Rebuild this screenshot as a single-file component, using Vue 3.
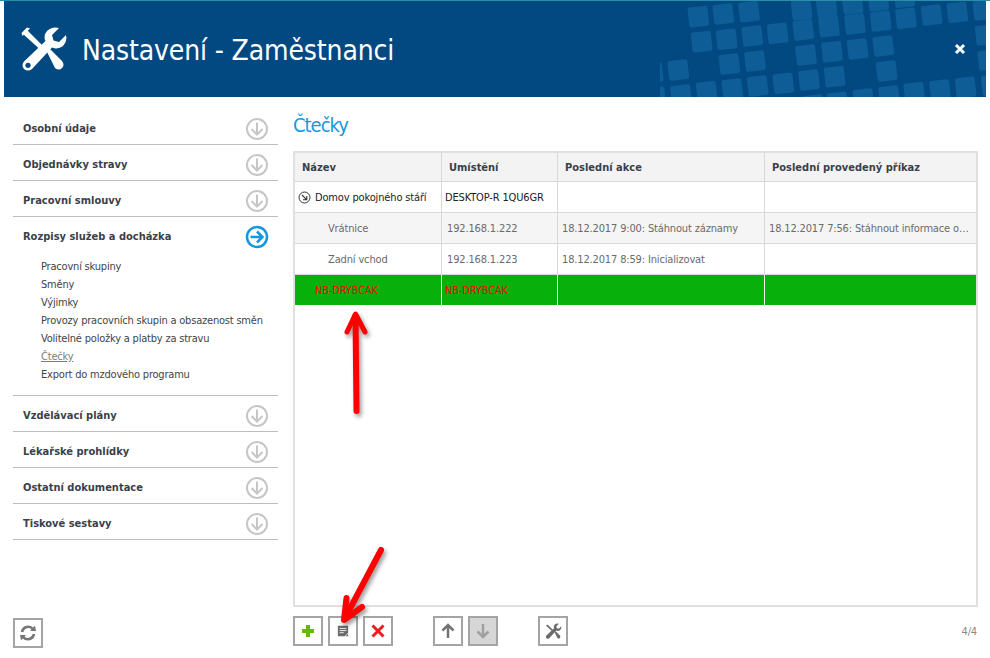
<script setup>
const squares = [
  [395,0],[470,-8],[548,-18],[625,-28],[703,-38],
  [85,20],[160,12],[237,5],[708,25],[785,15],[862,7],[940,0],
  [95,95],[170,88],[247,78],[323,70],[400,60],[477,50],[555,42],[632,33],
  [178,162],[255,153],[408,135],[486,125],[563,117],[640,108],[947,75],
  [25,180],[650,183],[955,150],[-52,188],
  [340,220],[417,210],[494,200],
  [263,228],[187,237],[110,245],[33,255],[-44,262],
  [965,225],[887,232],[810,240],[733,248],[657,258],[580,267],[503,277],[430,285]
].map(([x, y]) => ({ x: x / 3, y: y / 3 - 1 }))

const sectionsTop = ['Osobní údaje', 'Objednávky stravy', 'Pracovní smlouvy']
const sectionsBottom = ['Vzdělávací plány', 'Lékařské prohlídky', 'Ostatní dokumentace', 'Tiskové sestavy']
const subItems = [
  'Pracovní skupiny', 'Směny', 'Výjimky', 'Provozy pracovních skupin a obsazenost směn',
  'Volitelné položky a platby za stravu', 'Čtečky', 'Export do mzdového programu'
]
const headers = ['Název', 'Umístění', 'Poslední akce', 'Poslední provedený příkaz']
</script>

<template>
  <div class="page">
    <header class="header">
      <svg class="pattern" width="326" height="96" viewBox="0 0 326 96">
        <rect v-for="(s, i) in squares" :key="i" :x="s.x" :y="s.y" width="20" height="20" rx="2.5"
          fill="#0e5d97" :transform="`rotate(-6.5 ${s.x + 10} ${s.y + 10})`" />
      </svg>
      <svg class="logo" width="48" height="48" viewBox="0 0 48 48">
        <path d="M3 8 L7 4 L27 24 L24 27 Z" fill="#fff"/>
        <path d="M1.5 9 L9 1.5 L6 0.5 L0.5 6 Z" fill="#fff" transform="translate(1 1)"/>
        <path d="M27 26 L30 23 L42 35 Q45 39 42 42 Q39 45 35 42 Z" fill="#fff"/>
        <path d="M46 9 L39 16 L33.5 14.5 L32 9 L39 2 Q32 0 27 5 Q23 10 25.5 15 L4 35.5 Q1 39.5 4 43 Q8 46 12 43 L32 21.5 Q38 24 43 20 Q47.5 15 46 9 Z" fill="#fff"/>
        <circle cx="8" cy="39.3" r="2.6" fill="#024982"/>
      </svg>
      <h1 class="title">Nastavení - Zaměstnanci</h1>
      <svg class="close" width="12" height="12" viewBox="0 0 12 12">
        <path d="M2 2 L10 10 M10 2 L2 10" stroke="#fff" stroke-width="3"/>
      </svg>
    </header>

    <div class="main">
      <aside class="side">
        <nav class="nav">
          <div v-for="s in sectionsTop" :key="s" class="sec">
            <span>{{ s }}</span>
            <svg class="ci" width="24" height="24" viewBox="0 0 24 24">
              <circle cx="12" cy="12" r="10" fill="none" stroke="#c6c6c6" stroke-width="2"/>
              <path d="M12 5.5 V17.5 M6.5 12 L12 17.5 L17.5 12" fill="none" stroke="#c6c6c6" stroke-width="2"/>
            </svg>
          </div>
          <div class="open">
            <div class="sec plain">
              <span>Rozpisy služeb a docházka</span>
              <svg class="ci" width="24" height="24" viewBox="0 0 24 24">
                <circle cx="12" cy="12" r="10" fill="none" stroke="#1597e0" stroke-width="2.5"/>
                <path d="M5.5 12 H17.5 M12 6.5 L17.5 12 L12 17.5" fill="none" stroke="#1597e0" stroke-width="2.5"/>
              </svg>
            </div>
            <ul class="subs">
              <li v-for="it in subItems" :key="it" :class="{ cur: it === 'Čtečky' }">{{ it }}</li>
            </ul>
          </div>
          <div v-for="s in sectionsBottom" :key="s" class="sec">
            <span>{{ s }}</span>
            <svg class="ci" width="24" height="24" viewBox="0 0 24 24">
              <circle cx="12" cy="12" r="10" fill="none" stroke="#c6c6c6" stroke-width="2"/>
              <path d="M12 5.5 V17.5 M6.5 12 L12 17.5 L17.5 12" fill="none" stroke="#c6c6c6" stroke-width="2"/>
            </svg>
          </div>
        </nav>
        <button class="btn refresh" aria-label="Obnovit">
          <svg width="18" height="18" viewBox="0 0 18 18">
            <path d="M3 8 A6.3 6.3 0 0 1 14 5" fill="none" stroke="#777" stroke-width="2.6"/>
            <path d="M11 7 L17 7 L16 1.5 Z" fill="#777"/>
            <path d="M15 10 A6.3 6.3 0 0 1 4 13" fill="none" stroke="#777" stroke-width="2.6"/>
            <path d="M7 11 L1 11 L2 16.5 Z" fill="#777"/>
          </svg>
        </button>
      </aside>

      <section class="content">
        <h2 class="h2">Čtečky</h2>
        <div class="table">
          <div class="row head">
            <div v-for="h in headers" :key="h" class="cell">{{ h }}</div>
          </div>
          <div class="row group">
            <div class="cell first">
              <svg width="13" height="13" viewBox="0 0 13 13">
                <circle cx="6.5" cy="6.5" r="5.5" fill="none" stroke="#333" stroke-width="1"/>
                <path d="M4 4 L8.8 8.8 M8.8 5 V8.8 H5" fill="none" stroke="#333" stroke-width="1.1"/>
              </svg>
              <span>Domov pokojného stáří</span>
            </div>
            <div class="cell desk">DESKTOP-R 1QU6GR</div>
            <div class="cell"></div>
            <div class="cell"></div>
          </div>
          <div class="row item alt">
            <div class="cell name">Vrátnice</div>
            <div class="cell ip">192.168.1.222</div>
            <div class="cell tight">18.12.2017 9:00: Stáhnout záznamy</div>
            <div class="cell tight">18.12.2017 7:56: Stáhnout informace o…</div>
          </div>
          <div class="row item">
            <div class="cell name">Zadní vchod</div>
            <div class="cell ip">192.168.1.223</div>
            <div class="cell tight">18.12.2017 8:59: Inicializovat</div>
            <div class="cell"></div>
          </div>
          <div class="row green">
            <div class="cell nb">NB-DRYBCAK</div>
            <div class="cell desk">NB-DRYBCAK</div>
            <div class="cell"></div>
            <div class="cell"></div>
          </div>
        </div>
        <div class="toolbar">
          <button class="btn" aria-label="Přidat">
            <svg width="14" height="14" viewBox="0 0 14 14"><path d="M5 1 H9 V5 H13 V9 H9 V13 H5 V9 H1 V5 H5 Z" fill="#66b800"/></svg>
          </button>
          <button class="btn" aria-label="Upravit">
            <svg width="12" height="12" viewBox="0 0 14 14">
              <path d="M1 1 H13 V9 L9 13 H1 Z" fill="#6b6b6b"/>
              <path d="M3 4 H11 M3 6.5 H11 M3 9 H8" stroke="#fff" stroke-width="1"/>
              <path d="M13 10 V13 H10 Z" fill="#6b6b6b"/>
            </svg>
          </button>
          <button class="btn" aria-label="Smazat">
            <svg width="14" height="14" viewBox="0 0 14 14"><path d="M1.5 1.5 L12.5 12.5 M12.5 1.5 L1.5 12.5" stroke="#f01c24" stroke-width="3"/></svg>
          </button>
          <button class="btn gap" aria-label="Nahoru">
            <svg width="14" height="16" viewBox="0 0 14 16"><path d="M7 15 V2 M1.5 7.5 L7 2 L12.5 7.5" fill="none" stroke="#737373" stroke-width="2.5"/></svg>
          </button>
          <button class="btn off" aria-label="Dolů">
            <svg width="14" height="16" viewBox="0 0 14 16"><path d="M7 1 V14 M1.5 8.5 L7 14 L12.5 8.5" fill="none" stroke="#a0a0a0" stroke-width="2.5"/></svg>
          </button>
          <button class="btn gap" aria-label="Nastavení">
            <svg width="17" height="17" viewBox="0 0 48 48">
              <path d="M3 8 L7 4 L27 24 L24 27 Z" fill="#6b6b6b"/>
              <path d="M27 26 L30 23 L42 35 Q45 39 42 42 Q39 45 35 42 Z" fill="#6b6b6b"/>
              <path d="M46 9 L39 16 L33.5 14.5 L32 9 L39 2 Q32 0 27 5 Q23 10 25.5 15 L4 35.5 Q1 39.5 4 43 Q8 46 12 43 L32 21.5 Q38 24 43 20 Q47.5 15 46 9 Z" fill="#6b6b6b"/>
            </svg>
          </button>
          <span class="count">4/4</span>
        </div>
      </section>
    </div>

    <svg class="arrows" width="990" height="658" viewBox="0 0 990 658">
      <g fill="none" stroke="#fe0000" stroke-width="6" stroke-linecap="round" stroke-linejoin="round">
        <path d="M356.5 411 L355.5 316"/>
        <path d="M347 332 L355.5 314 L365 332" stroke-width="5"/>
        <path d="M381 550 L345 618"/>
        <path d="M346.5 598 L344 620 L362 607" stroke-width="6"/>
      </g>
    </svg>
  </div>
</template>

<style scoped>
.page {
  position: relative;
  width: 990px;
  height: 658px;
  background: #fff;
  border-top: 1px solid #2b8ea8;
  box-sizing: border-box;
  overflow: hidden;
  font-family: "DejaVu Sans", sans-serif;
  font-stretch: condensed;
  font-size: 11px;
  letter-spacing: -0.15px;
  display: flex;
  flex-direction: column;
}
.header {
  position: relative;
  height: 96px;
  margin: 0 4px;
  background: #024982;
  display: flex;
  align-items: center;
  padding: 0 0 0 16px;
  flex: none;
  overflow: hidden;
}
.pattern { position: absolute; right: 0; top: 0; }
.logo { position: relative; flex: none; margin-top: 2px; }
.title {
  position: relative;
  margin: 3px 0 0 14px;
  color: #fff;
  font-size: 28px;
  font-weight: 400;
  line-height: 1;
  letter-spacing: -0.13px;
}
.close { position: absolute; right: 20px; top: 42px; }
.main { flex: 1; display: flex; min-height: 0; }
.side {
  width: 265px;
  margin-left: 13px;
  padding-top: 12px;
  display: flex;
  flex-direction: column;
  justify-content: space-between;
  padding-bottom: 10px;
  flex: none;
  box-sizing: border-box;
}
.sec {
  height: 36px;
  display: flex;
  align-items: center;
  justify-content: space-between;
  padding: 4px 9px 0 10px;
  box-sizing: border-box;
  border-bottom: 1px solid #bdbdbd;
  font-weight: 700;
  font-size: 11px;
  letter-spacing: 0;
  color: #3a3f4a;
}
.sec.plain { border-bottom-color: transparent; }
.open { border-bottom: 1px solid #bdbdbd; padding-bottom: 11px; }
.subs { list-style: none; margin: 5px 0 0; padding: 0 0 0 28px; }
.subs li { height: 18px; line-height: 18px; color: #444; letter-spacing: -0.2px; }
.subs li.cur { color: #7c7c7c; text-decoration: underline; }
.content { margin-left: 15px; width: 685px; display: flex; flex-direction: column; }
.h2 {
  margin: 0;
  height: 54px;
  padding-top: 16px;
  box-sizing: border-box;
  color: #1a97df;
  font-size: 20px;
  font-weight: 400;
  line-height: 24px;
  letter-spacing: -1px;
}
.table {
  height: 456px;
  box-sizing: border-box;
  border: 2px solid #e0e0e0;
  display: flex;
  flex-direction: column;
}
.row {
  display: grid;
  grid-template-columns: 147px 116px 207px 1fr;
  height: 31px;
  flex: none;
  border-bottom: 1px solid #d8d8d8;
  box-sizing: border-box;
}
.row.head { height: 29px; background: #f3f3f3; font-weight: 700; color: #3a3f4a; letter-spacing: 0; }
.cell {
  border-right: 1px solid #d8d8d8;
  padding: 0 6px;
  display: flex;
  align-items: center;
  white-space: nowrap;
  overflow: hidden;
}
.cell:last-child { border-right: none; }
.head .cell { padding-left: 7px; }
.tight { padding-left: 4px; }
.ip { padding-left: 5px; }
.desk { padding-left: 3px; }
.first { padding-left: 3px; gap: 4px; color: #222; }
.group { color: #222; }
.item { color: #6a6a6a; }
.item.alt { background: #f5f5f5; }
.name { padding-left: 33px; }
.green { background: #07b00a; color: #f00; border-bottom: none; height: 30px; }
.green .cell { border-right-color: #eef7ee; }
.nb { padding-left: 20px; }
.toolbar {
  margin-top: 9px;
  display: flex;
  gap: 5px;
  align-items: center;
  position: relative;
}
.btn {
  width: 30px;
  height: 30px;
  padding: 0;
  box-sizing: border-box;
  background: #fff;
  border: 2px solid #a4a4a4;
  display: flex;
  align-items: center;
  justify-content: center;
  flex: none;
}
.btn.off { background: #d6d6d6; }
.gap { margin-left: 35px; }
.count { margin-left: auto; padding-right: 1px; color: #8a8a8a; font-size: 11px; }
.arrows {
  position: absolute;
  left: 0;
  top: -1px;
  pointer-events: none;
  filter: drop-shadow(2px 3px 2px rgba(0, 0, 0, 0.4));
}
</style>
